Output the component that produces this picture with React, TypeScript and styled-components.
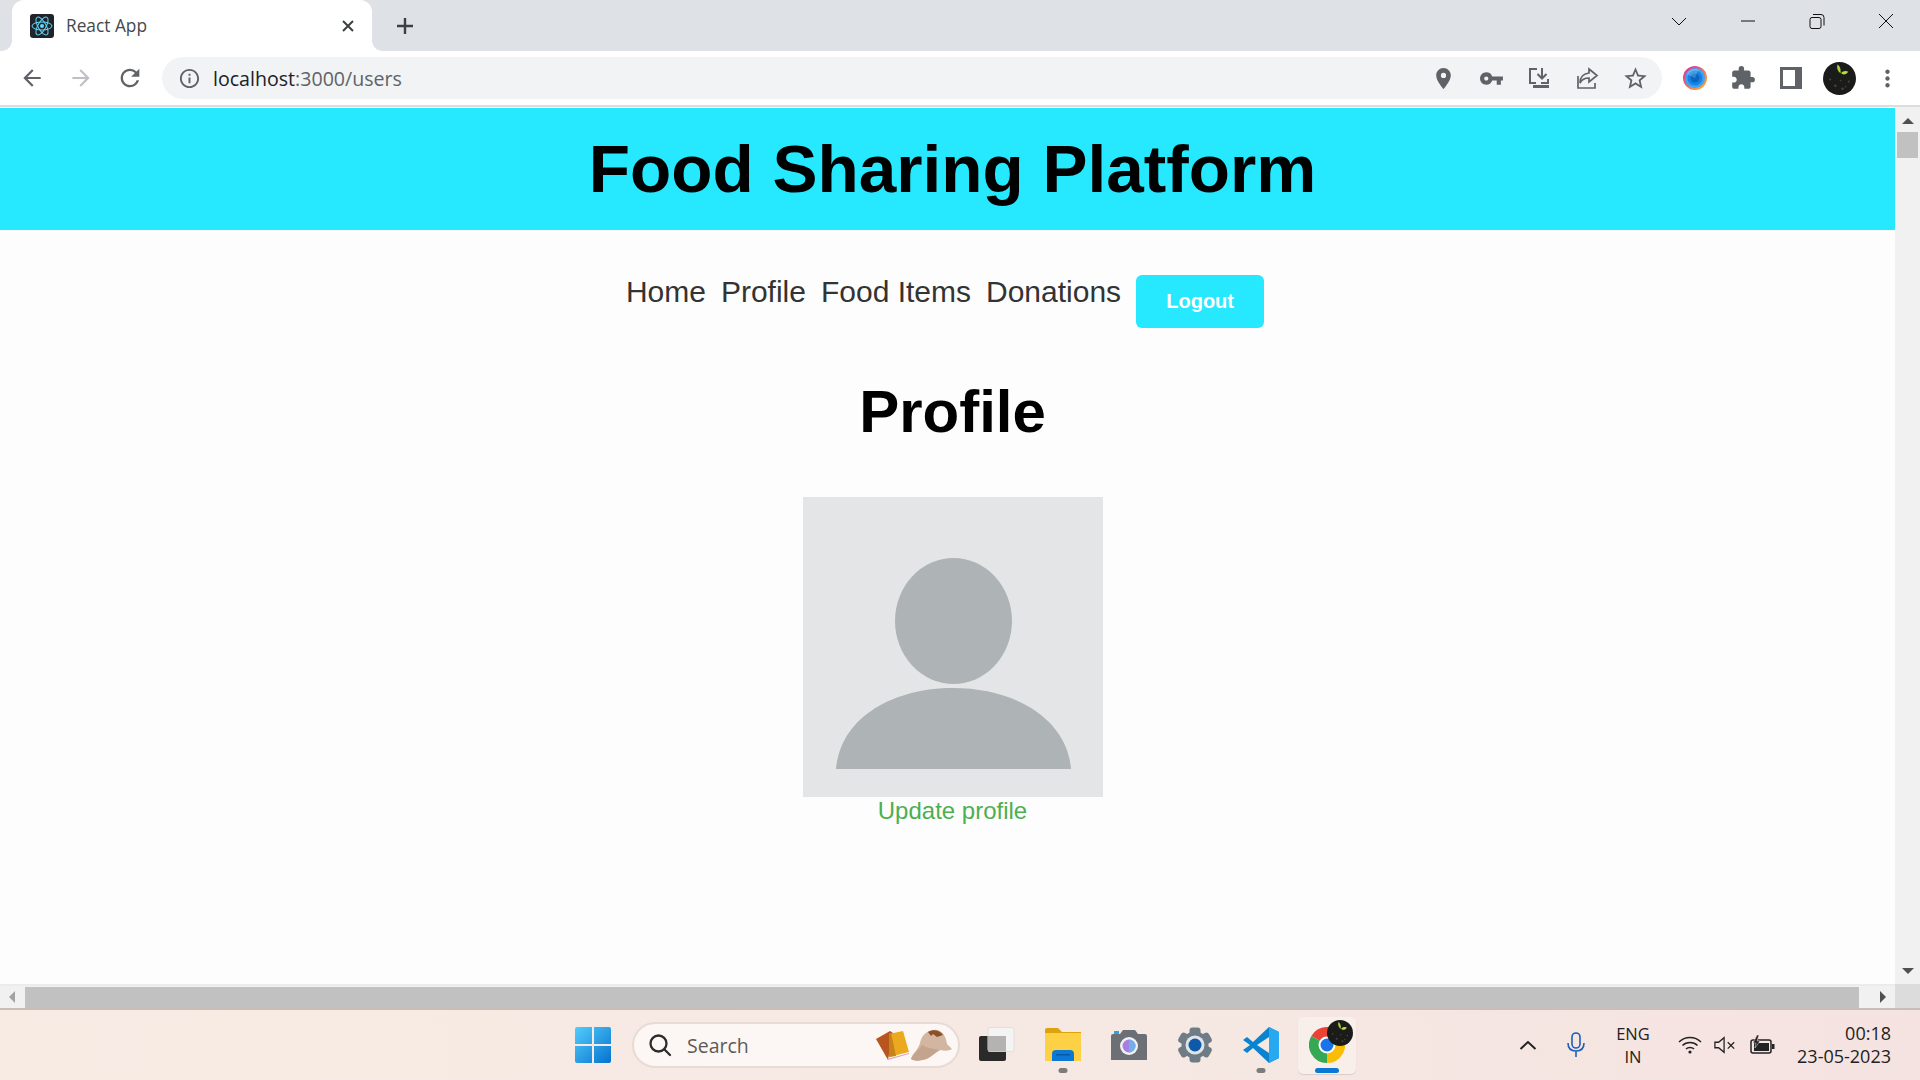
import React from "react";
import styled, { createGlobalStyle } from "styled-components";
import {
  MdArrowBack,
  MdArrowForward,
  MdRefresh,
  MdInfoOutline,
  MdPlace,
  MdVpnKey,
  MdStarBorder,
  MdExtension,
  MdMoreVert,
} from "react-icons/md";

const GlobalStyle = createGlobalStyle`
  html, body {
    margin: 0;
    padding: 0;
    height: 100%;
    overflow: hidden;
  }
  #root {
    height: 100%;
  }
`;

const Screen = styled.div`
  display: flex;
  flex-direction: column;
  width: 1920px;
  height: 1080px;
  font-family: "Liberation Sans", Arial, sans-serif;
  background: #fff;
`;

/* browser chrome */
const TabStrip = styled.div`
  display: flex;
  align-items: stretch;
  flex: none;
  height: 51px;
  padding-left: 12px;
  background: #dee1e6;
`;

const Tab = styled.div`
  position: relative;
  display: flex;
  align-items: center;
  width: 360px;
  box-sizing: border-box;
  padding: 0 17px 0 18px;
  background: #fff;
  border-radius: 12px 12px 0 0;

  &::before,
  &::after {
    content: "";
    position: absolute;
    bottom: 0;
    width: 10px;
    height: 10px;
    background: radial-gradient(circle at var(--cx) 0, #dee1e6 9.5px, #fff 10px);
  }
  &::before {
    --cx: 0;
    left: -10px;
  }
  &::after {
    --cx: 100%;
    right: -10px;
  }
`;

const TabTitle = styled.span`
  flex: 1;
  margin-left: 12px;
  font-family: "Open Sans", sans-serif;
  font-size: 17.3px;
  color: #45494e;
`;

const NewTab = styled.div`
  display: flex;
  align-items: center;
  justify-content: center;
  width: 40px;
  margin-left: 13px;
`;

const WindowControls = styled.div`
  display: flex;
  margin-left: auto;
`;

const WindowButton = styled.div`
  display: flex;
  align-items: center;
  justify-content: center;
  width: 69px;
  height: 42px;
`;

const Toolbar = styled.div`
  display: flex;
  align-items: center;
  flex: none;
  height: 54px;
  padding: 0 9px 0 8px;
  background: #fff;
  border-bottom: 2px solid #dcdcdc;
`;

const NavButtons = styled.div`
  display: flex;
  gap: 1px;
`;

const IconSlot = styled.div<{ $color?: string }>`
  display: flex;
  align-items: center;
  justify-content: center;
  flex: none;
  width: 48px;
  height: 42px;
  color: ${(p) => p.$color || "#5f6368"};
`;

const AddressBar = styled.div`
  display: flex;
  align-items: center;
  flex: 1;
  height: 42px;
  margin: 0 9px 0 8px;
  padding: 0 3px 0 16px;
  background: #f1f3f4;
  border-radius: 21px;
  color: #5f6368;
`;

const Url = styled.span`
  flex: 1;
  margin-left: 12px;
  font-family: "Open Sans", sans-serif;
  font-size: 19.6px;
  color: #5f6368;

  b {
    font-weight: 400;
    color: #202124;
  }
`;

/* page with its scrollbars */
const Viewport = styled.div`
  display: grid;
  grid-template-columns: 1fr 25px;
  grid-template-rows: 1fr 24px;
  flex: 1;
  min-height: 0;
`;

const PageClip = styled.div`
  overflow: hidden;
  background: #fdfdfd;
`;

const Page = styled.div`
  width: 1905px;
  padding-top: 1px;
`;

const Banner = styled.header`
  background: #26e9ff;
  padding: 22px 0;
  text-align: center;
`;

const Title = styled.h1`
  margin: 0;
  font-size: 67.5px;
  line-height: 78px;
  font-weight: 700;
  color: #000;
`;

const Nav = styled.nav`
  display: flex;
  justify-content: center;
  align-items: flex-start;
  gap: 15px;
  padding-top: 45px;
`;

const NavLink = styled.a`
  font-size: 30px;
  line-height: 34px;
  color: #333;
  text-decoration: none;
`;

const LogoutButton = styled.button`
  width: 128px;
  height: 53px;
  margin-right: 15px;
  border: none;
  border-radius: 6px;
  background: #26e9ff;
  color: #fff;
  font-family: inherit;
  font-size: 20px;
  font-weight: 700;
`;

const Main = styled.main`
  display: flex;
  flex-direction: column;
  align-items: center;
`;

const Heading = styled.h2`
  margin: 50px 0 51px;
  font-size: 60px;
  line-height: 68px;
  font-weight: 700;
  color: #000;
`;

const Avatar = styled.svg`
  display: block;
  width: 300px;
  height: 300px;
`;

const UpdateLink = styled.a`
  font-size: 24px;
  line-height: 28px;
  color: #4caf50;
  text-decoration: none;
`;

const VTrack = styled.div`
  display: flex;
  flex-direction: column;
  align-items: center;
  background: #f1f1f1;
`;

const VArrow = styled.div<{ $down?: boolean }>`
  width: 0;
  height: 0;
  margin-top: ${(p) => (p.$down ? "auto" : "11px")};
  margin-bottom: ${(p) => (p.$down ? "10px" : "0")};
  border-left: 6px solid transparent;
  border-right: 6px solid transparent;
  ${(p) => (p.$down ? "border-top" : "border-bottom")}: 6px solid #505050;
`;

const VThumb = styled.div`
  width: 21px;
  height: 26px;
  margin-top: 8px;
  background: #c1c1c1;
`;

const HTrack = styled.div`
  display: flex;
  align-items: center;
  background: #f1f1f1;
  border-top: 2px solid #ececec;
  box-sizing: border-box;
`;

const HArrow = styled.div<{ $right?: boolean }>`
  flex: none;
  width: 0;
  height: 0;
  margin: ${(p) => (p.$right ? "0 9px 0 21px" : "0 10px 0 9px")};
  border-top: 6px solid transparent;
  border-bottom: 6px solid transparent;
  ${(p) => (p.$right ? "border-left: 6px solid #505050" : "border-right: 6px solid #a3a3a3")};
`;

const HThumb = styled.div`
  flex: 1;
  height: 21px;
  background: #c1c1c1;
`;

const ScrollCorner = styled.div`
  background: #dcdcdc;
`;

/* windows taskbar */
const Taskbar = styled.footer`
  display: flex;
  align-items: center;
  flex: none;
  height: 72px;
  box-sizing: border-box;
  padding: 0 29px 0 560px;
  border-top: 2px solid #c8bdb8;
  background: linear-gradient(90deg, #f8ebe4 0%, #f6e9e3 50%, #f5e3e1 100%);
`;

const TaskSlot = styled.div<{ $active?: boolean }>`
  position: relative;
  display: flex;
  align-items: center;
  justify-content: center;
  flex: none;
  width: 66px;
  height: 57px;

  ${(p) =>
    p.$active &&
    `
    &::before {
      content: "";
      position: absolute;
      inset: 0 4px 0 4px;
      background: #f8eeea;
      border-radius: 5px;
      box-shadow: 0 1px 1px #d9cdc9;
    }
  `}
  svg {
    position: relative;
  }
`;

const RunDot = styled.span<{ $active?: boolean }>`
  position: absolute;
  left: 50%;
  bottom: 1px;
  width: ${(p) => (p.$active ? "24px" : "9px")};
  height: 5px;
  transform: translateX(-50%);
  border-radius: 3px;
  background: ${(p) => (p.$active ? "#0a78d4" : "#7f7b79")};
`;

const SearchBox = styled.div`
  display: flex;
  align-items: center;
  flex: none;
  width: 328px;
  height: 46px;
  box-sizing: border-box;
  margin: 0 4px 0 6px;
  padding: 0 6px 0 14px;
  border: 2px solid #e8dbd5;
  border-radius: 23px;
  background: #fcf7f4;
`;

const SearchLabel = styled.span`
  flex: 1;
  margin-left: 15px;
  font-family: "Open Sans", sans-serif;
  font-size: 19.5px;
  color: #5c5a58;
`;

const Tray = styled.div`
  display: flex;
  align-items: center;
  margin-left: auto;
`;

const TraySlot = styled.div<{ $w: number }>`
  display: flex;
  align-items: center;
  justify-content: center;
  flex: none;
  width: ${(p) => p.$w}px;
  color: #222;
`;

const TrayText = styled.div<{ $align: string; $w: number; $size: number }>`
  flex: none;
  width: ${(p) => p.$w}px;
  font-family: "Open Sans", sans-serif;
  font-size: ${(p) => p.$size}px;
  line-height: 23px;
  text-align: ${(p) => p.$align};
  color: #222;
`;

const ReactFavicon = () => (
  <svg width="24" height="24" viewBox="0 0 24 24">
    <rect width="24" height="24" rx="3" fill="#20232a" />
    <g fill="none" stroke="#61dafb" strokeWidth="1">
      <ellipse cx="12" cy="12" rx="10" ry="4" />
      <ellipse cx="12" cy="12" rx="10" ry="4" transform="rotate(60 12 12)" />
      <ellipse cx="12" cy="12" rx="10" ry="4" transform="rotate(120 12 12)" />
    </g>
    <circle cx="12" cy="12" r="2" fill="#61dafb" />
  </svg>
);

const WindowIcon = ({ d }: { d: string }) => (
  <svg width="16" height="16" viewBox="0 0 16 16" fill="none" stroke="#111" strokeWidth="1">
    <path d={d} />
  </svg>
);

const DownloadIcon = () => (
  <svg width="24" height="24" viewBox="0 0 24 24" fill="none" stroke="currentColor" strokeWidth="2">
    <path d="M10 3H3v14h6M15 2v10M10.500 8l4.500 4.500L19.500 8M21 13v4h-7" />
    <path d="M6 20.500h16" strokeWidth="3" />
  </svg>
);

const ShareIcon = () => (
  <svg width="24" height="24" viewBox="0 0 24 24" fill="none" stroke="currentColor" strokeWidth="1.700">
    <path d="M3 10v12h17v-5M14 3l8 6.500-8 6.500v-4c-4 0-7 1-9 5 0-6 4-9.500 9-10z" />
  </svg>
);

const SidebarIcon = () => (
  <svg width="22" height="22" viewBox="0 0 22 22">
    <path fill="#5f6368" fillRule="evenodd" d="M0 0h22v22H0zM3 3v16h12V3z" />
  </svg>
);

const ColorOrb = () => (
  <svg width="24" height="24" viewBox="0 0 24 24">
    <defs>
      <linearGradient id="orb" x1="0" y1="0" x2="1" y2="1">
        <stop offset="0" stopColor="#d6289e" />
        <stop offset="1" stopColor="#ffb52e" />
      </linearGradient>
    </defs>
    <circle cx="12" cy="12" r="12" fill="url(#orb)" />
    <circle cx="12" cy="12" r="10" fill="#3fa2f2" />
    <circle cx="12" cy="12" r="7.500" fill="#1583e6" />
    <circle cx="12" cy="12" r="4.500" fill="#0b66c0" />
    <path d="M3.500 8a9.500 9.500 0 0 1 12-4.500L12 12z" fill="#fff" opacity="0.2" />
  </svg>
);

const SproutAvatar = ({ size }: { size: number }) => (
  <svg width={size} height={size} viewBox="0 0 32 32">
    <circle cx="16" cy="16" r="16" fill="#1b1c1a" />
    <g fill="#45443f">
      <circle cx="7" cy="17" r="1" />
      <circle cx="12" cy="23" r="1.200" />
      <circle cx="19" cy="26" r="1.200" />
      <circle cx="25" cy="19" r="1" />
      <circle cx="17" cy="18" r="0.800" />
      <circle cx="22" cy="24" r="0.800" />
    </g>
    <path d="M14 2.500c2 1 3.500 4 3 8.500-2.500-1.500-4-5-3-8.500z" fill="#a6cf38" />
    <path d="M17.500 11c1.500-2.500 5-3 7-1.500-1.500 2.500-5 3.500-7 1.500z" fill="#b9dc45" />
  </svg>
);

const WinLogo = () => (
  <svg width="36" height="36" viewBox="0 0 36 36">
    <defs>
      <linearGradient id="win" x1="0" y1="0" x2="1" y2="1">
        <stop offset="0" stopColor="#52cdfb" />
        <stop offset="1" stopColor="#0672cf" />
      </linearGradient>
    </defs>
    <path fill="url(#win)" d="M0 2a2 2 0 0 1 2-2h15v17H0zM19 0h15a2 2 0 0 1 2 2v15H19zM0 19h17v17H2a2 2 0 0 1-2-2zM19 19h17v15a2 2 0 0 1-2 2H19z" />
  </svg>
);

const SearchGlyph = () => (
  <svg width="24" height="24" viewBox="0 0 24 24" fill="none" stroke="#2d2c2b" strokeWidth="2.300" strokeLinecap="round">
    <circle cx="10.500" cy="10.500" r="8" />
    <path d="M16.500 16.500l5.500 5.500" />
  </svg>
);

const BooksIcon = () => (
  <svg width="34" height="30" viewBox="0 0 34 30">
    <path d="M0 9L14 1l3 2-5 27z" fill="#b8541d" />
    <path d="M13 4l14-3 6 21-20 5z" fill="#eba91f" />
    <path d="M13 4l2-1 5 23-7 1z" fill="#c7821a" />
    <path d="M11 29l22-6v1l-21 6z" fill="#d9a5c5" />
  </svg>
);

const HatIcon = () => (
  <svg width="42" height="32" viewBox="0 0 42 32">
    <path d="M1 30c2-6 7-9 9-16C12 5 19 0 27 1c6 1 9 7 10 14l5 5c-3 2-7 2-12 1-6 3-10 9-18 10-4 1-8 1-11-1z" fill="#d3b6a1" />
    <path d="M12 16c5 3 12 4 18 5-6 3-10 9-18 10-4 1-8 1-11-1 2-6 8-9 11-14z" fill="#c5a48e" />
    <path d="M18 3c5-3 12-2 15 3l-6 2-4-3-2 2z" fill="#8d4f28" />
  </svg>
);

const TaskViewIcon = () => (
  <svg width="36" height="36" viewBox="0 0 36 36">
    <rect x="0" y="9" width="27" height="25" rx="2" fill="#2a2a2a" />
    <rect x="9" y="0.500" width="26" height="24" rx="2" fill="#f5f4f4" stroke="#e2dedc" />
    <rect x="9" y="9" width="18" height="15.500" fill="#b5b3b2" />
  </svg>
);

const FolderIcon = () => (
  <svg width="36" height="34" viewBox="0 0 36 34">
    <path d="M0 2a2 2 0 0 1 2-2h11l4 4h19v6H0z" fill="#dca30d" />
    <path d="M0 5h36v28H0z" fill="#fdd145" />
    <path d="M7 33v-7a4 4 0 0 1 4-4h14a4 4 0 0 1 4 4v7z" fill="#0a78d4" />
    <rect x="11" y="26" width="14" height="1.500" fill="#075a9f" />
  </svg>
);

const CameraIcon = () => (
  <svg width="36" height="30" viewBox="0 0 36 30">
    <path d="M0 6a2 2 0 0 1 2-2h7l3-4h12l3 4h7a2 2 0 0 1 2 2v24H0z" fill="#6c6f75" />
    <rect x="3" y="1" width="5" height="3" fill="#2ea3dd" />
    <circle cx="18" cy="16" r="9" fill="#f2f2f2" />
    <circle cx="18" cy="16" r="6.500" fill="#a77fe0" />
    <path d="M18 9.500a6.500 6.500 0 0 1 0 13z" fill="#6fb1e8" />
  </svg>
);

const GearIcon = () => (
  <svg width="36" height="36" viewBox="0 0 36 36">
    <g fill="#6f7c86">
      <circle cx="18" cy="18" r="13.500" />
      {[0, 60, 120, 180, 240, 300].map((a) => (
        <rect key={a} x="12.500" y="0.500" width="11" height="10" rx="3" transform={`rotate(${a} 18 18)`} />
      ))}
    </g>
    <circle cx="18" cy="18" r="9.500" fill="#dfe4e8" />
    <circle cx="18" cy="18" r="6.500" fill="#0f5aa8" />
  </svg>
);

const VsCodeIcon = () => (
  <svg width="36" height="36" viewBox="0 0 36 36">
    <path d="M26 0l10 5v26l-10 5-16-15-6 5-4-3 7-5-7-5 4-3 6 5z" fill="#0a84cf" />
    <path d="M26 0l10 5v26l-10 5z" fill="#27a8f0" />
    <path d="M26 10L14 18l12 8z" fill="#f6e9e3" />
  </svg>
);

const ChromeIcon = () => (
  <svg width="36" height="36" viewBox="0 0 36 36">
    <path d="M18 18L2.400 9A18 18 0 0 1 33.600 9z" fill="#ea4335" />
    <path d="M18 18L33.600 9A18 18 0 0 1 18 36z" fill="#fbbc04" />
    <path d="M18 18L18 36A18 18 0 0 1 2.400 9z" fill="#34a853" />
    <circle cx="18" cy="18" r="8.500" fill="#fff" />
    <circle cx="18" cy="18" r="6.500" fill="#1a73e8" />
  </svg>
);

const BadgeOverlay = styled.span`
  position: absolute;
  top: 3px;
  left: 33px;
`;

const ChevronUp = () => (
  <svg width="18" height="12" viewBox="0 0 18 12" fill="none" stroke="#222" strokeWidth="2">
    <path d="M1.500 10L9 3l7.500 7" />
  </svg>
);

const MicIcon = () => (
  <svg width="20" height="26" viewBox="0 0 20 26" fill="none" stroke="#1c5fb8" strokeWidth="1.600">
    <rect x="6" y="1" width="8" height="15" rx="4" />
    <path d="M2 11c0 5 3 8 8 8s8-3 8-8M10 19v6" />
  </svg>
);

const WifiIcon = () => (
  <svg width="24" height="20" viewBox="0 0 24 20" fill="none" stroke="#222" strokeWidth="1.500">
    <path d="M1 7c6-6 16-6 22 0M4.500 10.500c4-4 11-4 15 0M8 14c2-2 6-2 8 0" />
    <circle cx="12" cy="17" r="1.600" fill="#222" stroke="none" />
  </svg>
);

const SpeakerIcon = () => (
  <svg width="24" height="20" viewBox="0 0 24 20" fill="none" stroke="#222" strokeWidth="1.400">
    <path d="M1 7v6h4l6 5V2L5 7zM15 7l7 7M22 7l-7 7" />
  </svg>
);

const BatteryIcon = () => (
  <svg width="25" height="20" viewBox="0 0 25 20">
    <rect x="1" y="5" width="20" height="13" rx="2" fill="none" stroke="#222" strokeWidth="1.500" />
    <path d="M4 8h15v8H4z" fill="#222" />
    <rect x="22" y="9" width="2.500" height="5" fill="#222" />
    <path d="M7 0L3 8h3l-1 5 5-7H7l2-6z" fill="#222" stroke="#f5e3e1" strokeWidth="0.500" />
  </svg>
);

const App: React.FC = () => {
  return (
    <Screen>
      <GlobalStyle />
      <TabStrip>
        <Tab>
          <ReactFavicon />
          <TabTitle>React App</TabTitle>
          <svg width="14" height="14" viewBox="0 0 14 14" stroke="#3c4043" strokeWidth="2">
            <path d="M2 2l10 10M12 2L2 12" />
          </svg>
        </Tab>
        <NewTab>
          <svg width="20" height="20" viewBox="0 0 20 20" stroke="#3c4043" strokeWidth="2.400">
            <path d="M10 2v16M2 10h16" />
          </svg>
        </NewTab>
        <WindowControls>
          <WindowButton>
            <WindowIcon d="M1 5l7 7 7-7" />
          </WindowButton>
          <WindowButton>
            <WindowIcon d="M1 8h14" />
          </WindowButton>
          <WindowButton>
            <WindowIcon d="M3 4.500h7a2 2 0 0 1 2 2v7a2 2 0 0 1-2 2H3a2 2 0 0 1-2-2v-7a2 2 0 0 1 2-2zM4 1.500h8a3 3 0 0 1 3 3v8" />
          </WindowButton>
          <WindowButton>
            <WindowIcon d="M1 1l14 14M15 1L1 15" />
          </WindowButton>
        </WindowControls>
      </TabStrip>

      <Toolbar>
        <NavButtons>
          <IconSlot>
            <MdArrowBack size={26} />
          </IconSlot>
          <IconSlot $color="#bdc1c6">
            <MdArrowForward size={26} />
          </IconSlot>
          <IconSlot>
            <MdRefresh size={28} />
          </IconSlot>
        </NavButtons>
        <AddressBar>
          <MdInfoOutline size={23} />
          <Url>
            <b>localhost</b>:3000/users
          </Url>
          <IconSlot>
            <MdPlace size={25} />
          </IconSlot>
          <IconSlot>
            <MdVpnKey size={25} />
          </IconSlot>
          <IconSlot>
            <DownloadIcon />
          </IconSlot>
          <IconSlot>
            <ShareIcon />
          </IconSlot>
          <IconSlot>
            <MdStarBorder size={27} />
          </IconSlot>
        </AddressBar>
        <IconSlot>
          <ColorOrb />
        </IconSlot>
        <IconSlot>
          <MdExtension size={26} />
        </IconSlot>
        <IconSlot>
          <SidebarIcon />
        </IconSlot>
        <IconSlot>
          <SproutAvatar size={33} />
        </IconSlot>
        <IconSlot>
          <MdMoreVert size={27} />
        </IconSlot>
      </Toolbar>

      <Viewport>
        <PageClip>
          <Page>
            <Banner>
              <Title>Food Sharing Platform</Title>
            </Banner>
            <Nav>
              <NavLink href="#">Home</NavLink>
              <NavLink href="#">Profile</NavLink>
              <NavLink href="#">Food Items</NavLink>
              <NavLink href="#">Donations</NavLink>
              <LogoutButton>Logout</LogoutButton>
            </Nav>
            <Main>
              <Heading>Profile</Heading>
              <Avatar viewBox="0 0 300 300">
                <rect width="300" height="300" fill="#e4e5e7" />
                <ellipse cx="150.500" cy="124" rx="58.500" ry="63" fill="#aeb3b6" />
                <path d="M33 272C37 222 88 191 150 191s114 31 118 81z" fill="#aeb3b6" />
              </Avatar>
              <UpdateLink href="#">Update profile</UpdateLink>
            </Main>
          </Page>
        </PageClip>
        <VTrack>
          <VArrow />
          <VThumb />
          <VArrow $down />
        </VTrack>
        <HTrack>
          <HArrow />
          <HThumb />
          <HArrow $right />
        </HTrack>
        <ScrollCorner />
      </Viewport>

      <Taskbar>
        <TaskSlot>
          <WinLogo />
        </TaskSlot>
        <SearchBox>
          <SearchGlyph />
          <SearchLabel>Search</SearchLabel>
          <BooksIcon />
          <HatIcon />
        </SearchBox>
        <TaskSlot>
          <TaskViewIcon />
        </TaskSlot>
        <TaskSlot>
          <FolderIcon />
          <RunDot />
        </TaskSlot>
        <TaskSlot>
          <CameraIcon />
        </TaskSlot>
        <TaskSlot>
          <GearIcon />
        </TaskSlot>
        <TaskSlot>
          <VsCodeIcon />
          <RunDot />
        </TaskSlot>
        <TaskSlot $active>
          <ChromeIcon />
          <BadgeOverlay>
            <SproutAvatar size={26} />
          </BadgeOverlay>
          <RunDot $active />
        </TaskSlot>
        <Tray>
          <TraySlot $w={48}>
            <ChevronUp />
          </TraySlot>
          <TraySlot $w={48}>
            <MicIcon />
          </TraySlot>
          <TrayText $w={66} $size={16.5} $align="center">
            ENG
            <br />
            IN
          </TrayText>
          <TraySlot $w={48}>
            <WifiIcon />
          </TraySlot>
          <TraySlot $w={22}>
            <SpeakerIcon />
          </TraySlot>
          <TraySlot $w={52}>
            <BatteryIcon />
          </TraySlot>
          <TrayText $w={103} $size={18} $align="right">
            00:18
            <br />
            23-05-2023
          </TrayText>
        </Tray>
      </Taskbar>
    </Screen>
  );
};

export default App;
